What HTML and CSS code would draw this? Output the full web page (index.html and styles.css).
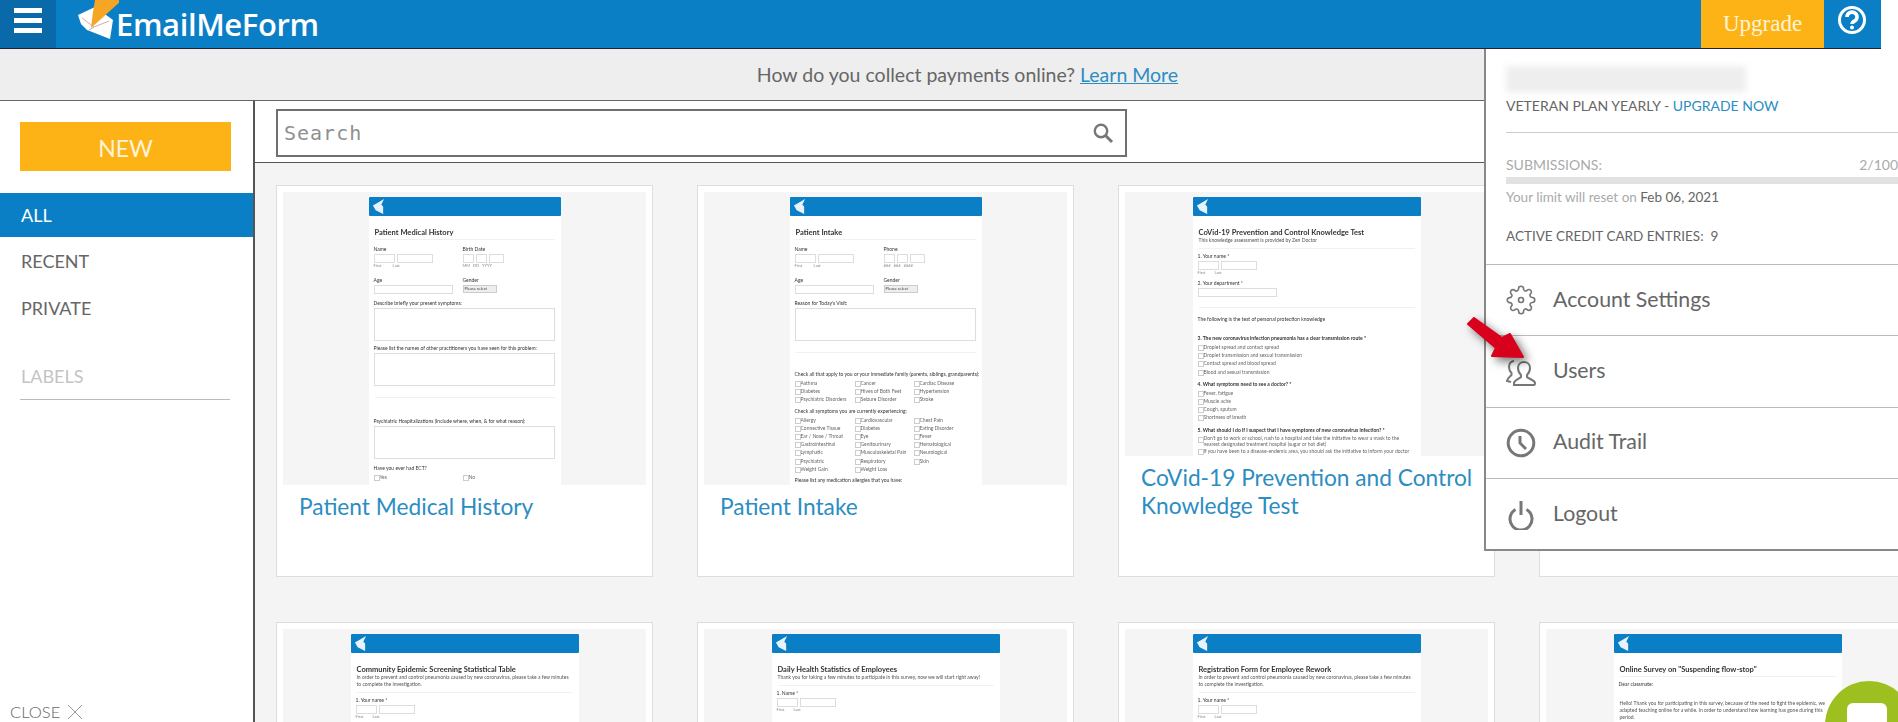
FILE: index.html
```html
<!DOCTYPE html>
<html>
<head>
  <title>EmailMeForm</title>
  <link rel="stylesheet" href="styles.css">
</head>
<body>
  <svg class="defs" width="0" height="0">
    <symbol id="mini-logo" viewBox="0 0 14 16">
      <polygon points="1,7 8,3 13,0 10,6 12,8 12,16 4,12" fill="#e8f2fa"/>
    </symbol>
  </svg>

  <!-- Top bar -->
  <header class="topbar">
    <div class="burger"><span></span><span></span><span></span></div>
    <div class="brand">
      <svg class="brand-mark" viewBox="0 0 42 40">
        <polygon points="1,15 18,7 36,20 33,39 10,30 4,24" fill="#fff"/>
        <polygon points="18,0 45,0 14,28 16,12" fill="#f5a623"/>
        <path d="M5 18 L17 27 L32 21 M12 30 L17 27" stroke="#d9a9a0" stroke-width="1" fill="none"/>
      </svg>
      <span class="brand-name">EmailMeForm</span>
    </div>
    <a class="upgrade">Upgrade</a>
    <div class="help">
      <svg width="30" height="30" viewBox="0 0 30 30">
        <circle cx="15" cy="15" r="12.5" fill="none" stroke="#fff" stroke-width="3"/>
        <path d="M10 12 a5 4.800 0 1 1 7.800 3.900 c-1.800 1-2.800 1.600-2.800 3.100" fill="none" stroke="#fff" stroke-width="3.600"/>
        <circle cx="15" cy="22.500" r="2" fill="#fff"/>
      </svg>
    </div>
  </header>

  <!-- Payment notice -->
  <div class="notice">How do you collect payments online?&nbsp;<a>Learn More</a></div>

  <div class="layout">
    <!-- Left menu -->
    <aside class="sidebar">
      <a class="new-btn">NEW</a>
      <nav class="menu">
        <a class="menu-item active">ALL</a>
        <a class="menu-item">RECENT</a>
        <a class="menu-item">PRIVATE</a>
      </nav>
      <div class="labels">LABELS</div>
      <div class="close">CLOSE
        <svg width="16" height="16" viewBox="0 0 16 16"><path d="M1 1 L15 15 M15 1 L1 15" stroke="#999" stroke-width="1"/></svg>
      </div>
    </aside>

    <main class="content">
      <div class="search-row">
        <div class="search">
          <input class="search-input" type="text" placeholder="Search">
          <svg width="22" height="22" viewBox="0 0 22 22">
            <circle cx="9" cy="9" r="6.200" fill="none" stroke="#777" stroke-width="2.400"/>
            <path d="M13.500 13.500 L20 20" stroke="#777" stroke-width="3"/>
          </svg>
        </div>
      </div>

      <div class="cards">
        <!-- Patient Medical History -->
        <article class="card">
          <div class="thumb">
            <div class="sheet">
              <div class="sheet-head"><svg><use href="#mini-logo"/></svg></div>
              <div class="sheet-title">Patient Medical History</div>
              <div class="f-two">
                <div><div class="f-label">Name</div><div class="f-inline"><i class="f-box w20"></i><i class="f-box w36"></i></div><div class="f-hint">First &nbsp; &nbsp; &nbsp; &nbsp; &nbsp; Last</div></div>
                <div><div class="f-label">Birth Date</div><div class="f-inline"><i class="f-box w11"></i><i class="f-box w11"></i><i class="f-box w14"></i></div><div class="f-hint">MM &nbsp; DD &nbsp; YYYY</div></div>
              </div>
              <div class="f-two">
                <div><div class="f-label">Age</div><i class="f-box w79"></i></div>
                <div><div class="f-label">Gender</div><i class="f-select">Please select</i></div>
              </div>
              <div class="f-label">Describe briefly your present symptoms:</div>
              <div class="f-area"></div>
              <div class="f-label">Please list the names of other practitioners you have seen for this problem:</div>
              <div class="f-area"></div>
              <div class="f-rule"></div>
              <div class="f-label">Psychiatric Hospitalizations (Include where, when, &amp; for what reason):</div>
              <div class="f-area"></div>
              <div class="f-label">Have you ever had ECT?</div>
              <div class="f-two"><div class="f-check">Yes</div><div class="f-check">No</div></div>
            </div>
          </div>
          <a class="card-title">Patient Medical History</a>
        </article>

        <!-- Patient Intake -->
        <article class="card">
          <div class="thumb">
            <div class="sheet">
              <div class="sheet-head"><svg><use href="#mini-logo"/></svg></div>
              <div class="sheet-title">Patient Intake</div>
              <div class="f-two">
                <div><div class="f-label">Name</div><div class="f-inline"><i class="f-box w20"></i><i class="f-box w36"></i></div><div class="f-hint">First &nbsp; &nbsp; &nbsp; &nbsp; &nbsp; Last</div></div>
                <div><div class="f-label">Phone</div><div class="f-inline"><i class="f-box w11"></i><i class="f-box w11"></i><i class="f-box w14"></i></div><div class="f-hint">### &nbsp; ### &nbsp; ####</div></div>
              </div>
              <div class="f-two">
                <div><div class="f-label">Age</div><i class="f-box w79"></i></div>
                <div><div class="f-label">Gender</div><i class="f-select">Please select</i></div>
              </div>
              <div class="f-label">Reason for Today's Visit:</div>
              <div class="f-area"></div>
              <div class="f-rule gap-low"></div>
              <div class="f-label">Check all that apply to you or your immediate family (parents, siblings, grandparents):</div>
              <div class="f-three">
                <div class="f-check">Asthma</div><div class="f-check">Cancer</div><div class="f-check">Cardiac Disease</div>
                <div class="f-check">Diabetes</div><div class="f-check">Hives of Both Feet</div><div class="f-check">Hypertension</div>
                <div class="f-check">Psychiatric Disorders</div><div class="f-check">Seizure Disorder</div><div class="f-check">Stroke</div>
              </div>
              <div class="f-label">Check all symptoms you are currently experiencing:</div>
              <div class="f-three">
                <div class="f-check">Allergy</div><div class="f-check">Cardiovascular</div><div class="f-check">Chest Pain</div>
                <div class="f-check">Connective Tissue</div><div class="f-check">Diabetes</div><div class="f-check">Eating Disorder</div>
                <div class="f-check">Ear / Nose / Throat</div><div class="f-check">Eye</div><div class="f-check">Fever</div>
                <div class="f-check">Gastrointestinal</div><div class="f-check">Genitourinary</div><div class="f-check">Hematological</div>
                <div class="f-check">Lymphatic</div><div class="f-check">Musculoskeletal Pain</div><div class="f-check">Neurological</div>
                <div class="f-check">Psychiatric</div><div class="f-check">Respiratory</div><div class="f-check">Skin</div>
                <div class="f-check">Weight Gain</div><div class="f-check">Weight Loss</div>
              </div>
              <div class="f-label">Please list any medication allergies that you have:</div>
            </div>
          </div>
          <a class="card-title">Patient Intake</a>
        </article>

        <!-- CoVid-19 test -->
        <article class="card">
          <div class="thumb thumb-short">
            <div class="sheet sheet-wide">
              <div class="sheet-head"><svg><use href="#mini-logo"/></svg></div>
              <div class="sheet-title has-sub">CoVid-19 Prevention and Control Knowledge Test</div>
              <div class="sheet-sub">This knowledge assessment is provided by Zen Doctor</div>
              <div class="f-label">1. Your name *</div>
              <div class="f-inline"><i class="f-box w20"></i><i class="f-box w36"></i></div>
              <div class="f-hint">First &nbsp; &nbsp; &nbsp; &nbsp; Last</div>
              <div class="f-label">2. Your department *</div>
              <i class="f-box w79"></i>
              <div class="f-rule gap-tight"></div>
              <div class="f-label">The following is the test of personal protection knowledge</div>
              <div class="f-label strong gap-q">3. The new coronavirus infection pneumonia has a clear transmission route *</div>
              <div class="f-check">Droplet spread and contact spread</div>
              <div class="f-check">Droplet transmission and sexual transmission</div>
              <div class="f-check">Contact spread and blood spread</div>
              <div class="f-check">Blood and sexual transmission</div>
              <div class="f-label strong">4. What symptoms need to see a doctor? *</div>
              <div class="f-check">Fever, fatigue</div>
              <div class="f-check">Muscle ache</div>
              <div class="f-check">Cough, sputum</div>
              <div class="f-check">Shortness of breath</div>
              <div class="f-label strong">5. What should I do if I suspect that I have symptoms of new coronavirus infection? *</div>
              <div class="f-check wrap">Don't go to work or school, rush to a hospital and take the initiative to wear a mask to the nearest designated treatment hospital (sugar or hot diet)</div>
              <div class="f-check">If you have been to a disease-endemic area, you should ask the initiative to inform your doctor</div>
            </div>
          </div>
          <a class="card-title">CoVid-19 Prevention and Control Knowledge Test</a>
        </article>

        <article class="card"></article>

        <!-- Second row, cut off by the window -->
        <article class="card">
          <div class="thumb">
            <div class="sheet sheet-wide">
              <div class="sheet-head"><svg><use href="#mini-logo"/></svg></div>
              <div class="sheet-title has-sub">Community Epidemic Screening Statistical Table</div>
              <div class="sheet-sub">In order to prevent and control pneumonia caused by new coronavirus, please take a few minutes to complete the investigation.</div>
              <div class="f-label">1. Your name *</div>
              <div class="f-inline"><i class="f-box w20"></i><i class="f-box w36"></i></div>
              <div class="f-hint">First &nbsp; &nbsp; &nbsp; &nbsp; Last</div>
            </div>
          </div>
        </article>
        <article class="card">
          <div class="thumb">
            <div class="sheet sheet-wide">
              <div class="sheet-head"><svg><use href="#mini-logo"/></svg></div>
              <div class="sheet-title has-sub">Daily Health Statistics of Employees</div>
              <div class="sheet-sub">Thank you for taking a few minutes to participate in this survey, now we will start right away!</div>
              <div class="f-label">1. Name *</div>
              <div class="f-inline"><i class="f-box w20"></i><i class="f-box w36"></i></div>
              <div class="f-hint">First &nbsp; &nbsp; &nbsp; &nbsp; Last</div>
            </div>
          </div>
        </article>
        <article class="card">
          <div class="thumb">
            <div class="sheet sheet-wide">
              <div class="sheet-head"><svg><use href="#mini-logo"/></svg></div>
              <div class="sheet-title has-sub">Registration Form for Employee Rework</div>
              <div class="sheet-sub">In order to prevent and control pneumonia caused by new coronavirus, please take a few minutes to complete the investigation.</div>
              <div class="f-label">1. Your name *</div>
              <div class="f-inline"><i class="f-box w20"></i><i class="f-box w36"></i></div>
              <div class="f-hint">First &nbsp; &nbsp; &nbsp; &nbsp; Last</div>
            </div>
          </div>
        </article>
        <article class="card">
          <div class="thumb">
            <div class="sheet sheet-wide">
              <div class="sheet-head"><svg><use href="#mini-logo"/></svg></div>
              <div class="sheet-title">Online Survey on "Suspending flow-stop"</div>
              <div class="f-label">Dear classmate:</div>
              <div class="sheet-sub gap-q">Hello! Thank you for participating in this survey, because of the need to fight the epidemic, we adapted teaching online for a while. In order to understand how learning has gone during this period.</div>
            </div>
          </div>
        </article>
      </div>
    </main>
  </div>

  <!-- Account dropdown -->
  <section class="account">
    <div class="account-top">
      <div class="blurred-name"></div>
      <div class="plan">VETERAN PLAN YEARLY - <a>UPGRADE NOW</a></div>
    </div>
    <div class="usage">
      <div class="usage-head"><span>SUBMISSIONS:</span><span>2/100</span></div>
      <div class="usage-bar"></div>
      <div class="usage-reset">Your limit will reset on <b>Feb 06, 2021</b></div>
      <div class="usage-cards">ACTIVE CREDIT CARD ENTRIES:&nbsp; 9</div>
    </div>
    <a class="account-row">
      <svg width="30" height="30" viewBox="0 0 24 24" fill="none" stroke="#777" stroke-width="1.300">
        <circle cx="12" cy="12" r="2"/>
        <path d="M19.400 15a1.650 1.650 0 0 0 .33 1.820l.06.06a2 2 0 0 1 0 2.830 2 2 0 0 1-2.830 0l-.06-.06a1.650 1.650 0 0 0-1.820-.33 1.650 1.650 0 0 0-1 1.510V21a2 2 0 0 1-2 2 2 2 0 0 1-2-2v-.09A1.650 1.650 0 0 0 9 19.400a1.650 1.650 0 0 0-1.820.33l-.06.06a2 2 0 0 1-2.830 0 2 2 0 0 1 0-2.830l.06-.06a1.650 1.650 0 0 0 .33-1.820 1.650 1.650 0 0 0-1.510-1H3a2 2 0 0 1-2-2 2 2 0 0 1 2-2h.09A1.650 1.650 0 0 0 4.600 9a1.650 1.650 0 0 0-.33-1.820l-.06-.06a2 2 0 0 1 0-2.830 2 2 0 0 1 2.830 0l.06.06a1.650 1.650 0 0 0 1.820.33H9a1.650 1.650 0 0 0 1-1.510V3a2 2 0 0 1 2-2 2 2 0 0 1 2 2v.09a1.650 1.650 0 0 0 1 1.510 1.650 1.650 0 0 0 1.820-.33l.06-.06a2 2 0 0 1 2.830 0 2 2 0 0 1 0 2.830l-.06.06a1.650 1.650 0 0 0-.33 1.820V9a1.650 1.650 0 0 0 1.510 1H21a2 2 0 0 1 2 2 2 2 0 0 1-2 2h-.09a1.650 1.650 0 0 0-1.510 1z"/>
      </svg>
      Account Settings
    </a>
    <a class="account-row">
      <svg width="30" height="30" viewBox="0 0 30 30" fill="none" stroke="#777" stroke-width="2">
        <path d="M8 28 h20 c1 0 1-1 1-2 c-.5-3-6-4-8-6 v-2 c2-2 3-4 3-7 c0-4-3-6-6-6 s-6 2-6 6 c0 3 1 5 3 7 v2 c-2 2-6.500 3-7 6 c0 1 0 2 0 2z"/>
        <path d="M8 4 c-3 .5-5 2.500-5 6 c0 2.500 1 4.500 2.500 6 v2 c-1.500 1.500-4 3-4.500 6 l4 1"/>
      </svg>
      Users
    </a>
    <a class="account-row">
      <svg width="30" height="30" viewBox="0 0 30 30" fill="none" stroke="#777">
        <circle cx="15" cy="15" r="12.800" stroke-width="3"/>
        <path d="M14 8 L14 15 L20 21" stroke-width="3"/>
      </svg>
      Audit Trail
    </a>
    <a class="account-row">
      <svg width="30" height="30" viewBox="0 0 30 30" fill="none" stroke="#777" stroke-width="3">
        <path d="M9.500 9.500 a11 11 0 1 0 11 0"/>
        <path d="M15 1 V15"/>
      </svg>
      Logout
    </a>
  </section>

  <!-- Red callout arrow -->
  <svg class="callout" width="70" height="60" viewBox="0 0 70 60">
    <polygon fill="#d9001b" stroke="#d9001b" stroke-width="2" stroke-linejoin="round" points="2,9 8,3 36,23 44,19 57,42 26,41 30,33"/>
  </svg>

  <!-- Chat bubble -->
  <div class="chat"><span class="chat-face"></span></div>
</body>
</html>
```

FILE: styles.css
```css
* {
  box-sizing: border-box;
}

html, body {
  height: 722px;
  overflow: hidden;
}

body {
  margin: 0;
  position: relative;
  background-color: #fff;
  font-family: Lato, "Open Sans", sans-serif;
  color: #666;
}

a {
  text-decoration: none;
}

.defs {
  position: absolute;
}

/* Top bar */
.topbar {
  display: flex;
  align-items: stretch;
  width: 1881px;
  height: 49px;
  background-color: #0a7fc6;
  border-bottom: 1px solid #223;
}

.burger {
  width: 56px;
  display: flex;
  flex-direction: column;
  gap: 5px;
  padding: 8px 14px;
  background-color: #0a69a8;
}

.burger span {
  display: block;
  height: 5px;
  background-color: #fff;
}

.brand {
  display: flex;
  align-items: center;
  flex: 1;
  padding-left: 21px;
}

.brand-mark {
  width: 42px;
  height: 40px;
  margin-top: -8px;
}

.brand-name {
  margin-left: -3px;
  font-family: "Open Sans", sans-serif;
  font-size: 31px;
  font-weight: 600;
  letter-spacing: -0.4px;
  color: #fff;
}

.upgrade {
  width: 123px;
  display: flex;
  align-items: center;
  justify-content: center;
  background-color: #fdb316;
  color: #fff4d8;
  font-family: "Liberation Serif", serif;
  font-size: 23px;
}

.help {
  width: 57px;
  display: flex;
  justify-content: center;
  padding-top: 5px;
  padding-right: 1px;
}

/* Notice strip */
.notice {
  height: 52px;
  display: flex;
  align-items: center;
  justify-content: center;
  padding-left: 37px;
  background-color: #eeeeee;
  border-bottom: 1px solid #666;
  font-size: 19.500px;
  color: #666;
}

.notice a {
  color: #2b8dc2;
  text-decoration: underline;
}

.layout {
  display: flex;
  height: 621px;
}

/* Left menu */
.sidebar {
  position: relative;
  width: 255px;
  flex: none;
  padding-top: 21px;
  background-color: #fff;
  border-right: 2px solid #555;
}

.new-btn {
  display: flex;
  align-items: center;
  justify-content: center;
  width: 211px;
  height: 49px;
  margin-left: 20px;
  padding-top: 3px;
  background-color: #fdb316;
  color: #fff4d8;
  font-size: 23px;
}

.menu {
  margin-top: 22px;
}

.menu-item {
  display: flex;
  align-items: center;
  height: 47px;
  padding-left: 21px;
  font-size: 18px;
  color: #666;
}

.menu-item.active {
  height: 44px;
  background-color: #0a7fc6;
  color: #fff;
}

.labels {
  margin: 34px 23px 0 20px;
  padding: 0 0 12px 1px;
  border-bottom: 1px solid #bbb;
  font-size: 18px;
  color: #c4c4c4;
}

.close {
  position: absolute;
  left: 10px;
  bottom: 0;
  display: flex;
  align-items: center;
  gap: 7px;
  font-size: 16.500px;
  font-weight: 300;
  color: #666;
}

/* Main column */
.content {
  flex: 1;
  min-width: 0;
  overflow: hidden;
  background-color: #f4f4f4;
}

.search-row {
  height: 62px;
  padding: 8px 0 0 21px;
  background-color: #fff;
  border-bottom: 1px solid #555;
}

.search {
  display: flex;
  align-items: center;
  width: 851px;
  height: 48px;
  padding: 0 11px 0 6px;
  background-color: #fff;
  border: 2px solid #707070;
}

.search-input {
  flex: 1;
  border: none;
  outline: none;
  padding: 0;
  font-family: "DejaVu Sans Mono", monospace;
  font-size: 20px;
  letter-spacing: 1px;
}

.search-input::placeholder {
  color: #8f8f8f;
}

.cards {
  display: grid;
  grid-template-columns: repeat(4, 377px);
  grid-auto-rows: 392px;
  column-gap: 44px;
  row-gap: 45px;
  padding: 22px 0 0 21px;
}

.card {
  display: flex;
  flex-direction: column;
  padding: 6px;
  background-color: #fff;
  border: 1px solid #ddd;
}

.thumb {
  height: 293px;
  flex: none;
  overflow: hidden;
  padding-top: 5px;
  background-color: #f5f5f5;
  filter: blur(0.6px);
}

.thumb-short {
  height: 264px;
}

.card-title {
  display: block;
  padding: 8px 0 0 16px;
  font-size: 22.700px;
  line-height: 28px;
  color: #2b8dc2;
}

/* The little form pictures inside a card */
.sheet {
  width: 192px;
  margin: 0 auto;
  min-height: 100%;
  padding-bottom: 20px;
  background-color: #fff;
  font-size: 5px;
  color: #444;
}

.sheet-wide {
  width: 228px;
}

.sheet-head {
  height: 19px;
  margin-bottom: 12px;
  padding: 2px 0 0 3px;
  background-color: #0a7fc6;
  border-radius: 1px;
}

.sheet-head svg {
  display: block;
  width: 13px;
  height: 15px;
}

.sheet-title {
  margin: 0 6px 2px;
  padding-bottom: 2px;
  border-bottom: 1px solid #f1f1f1;
  font-size: 7.500px;
  font-weight: 700;
  color: #333;
  white-space: nowrap;
}

.sheet-title.has-sub {
  margin-bottom: 0;
  padding-bottom: 0;
  border: none;
}

.sheet-sub {
  margin: 0 6px 3px;
  padding-bottom: 4px;
  border-bottom: 1px solid #f1f1f1;
  font-size: 5px;
  line-height: 7px;
  color: #555;
}

.f-two {
  display: grid;
  grid-template-columns: 89px 1fr;
  margin: 0 5px;
}

.f-two + .f-two {
  margin-top: 4px;
}

.f-three {
  display: grid;
  grid-template-columns: 60px 59px 1fr;
  margin: 0 5px 1px;
}

.f-label {
  margin: 4px 5px 1px;
  font-size: 5px;
  line-height: 7px;
  white-space: nowrap;
  color: #333;
}

.f-two .f-label {
  margin: 4px 0 1px;
}

.f-two + .f-label {
  margin-top: 6px;
}

.f-label.strong {
  margin-top: 5px;
  font-weight: 700;
}

.sheet-sub.gap-q,
.f-label.gap-q {
  margin-top: 12px;
}

.f-inline {
  display: flex;
  gap: 2px;
}

.sheet > .f-inline,
.sheet > .f-box {
  margin-left: 5px;
}

.f-box {
  display: block;
  height: 9px;
  background-color: #fff;
  border: 1px solid #ddd;
}

.w11 { width: 11px; }
.w14 { width: 15px; }
.w20 { width: 21px; }
.w36 { width: 36px; }
.w79 { width: 79px; }

.f-hint {
  margin: 0 5px;
  font-size: 4px;
  line-height: 6px;
  color: #888;
}

.f-two .f-hint {
  margin: 0;
}

.f-select {
  display: block;
  width: 34px;
  height: 8px;
  padding-left: 1px;
  background-color: #eee;
  border: 1px solid #ccc;
  font-size: 4px;
  font-style: normal;
  line-height: 6px;
  color: #444;
}

.f-area {
  height: 33px;
  margin: 0 6px 4px 5px;
  background-color: #fff;
  border: 1px solid #ddd;
}

.f-area + .f-label + .f-two {
  margin-top: 1px;
}

.f-rule {
  margin: 11px 6px 20px;
  border-top: 1px solid #f1f1f1;
}

.f-rule + .f-label + .f-area {
  margin-bottom: 6px;
}

.f-rule.gap-low {
  margin-bottom: 18px;
}

.f-rule.gap-tight {
  margin: 10px 6px 8px;
}

.f-check {
  position: relative;
  padding-left: 6px;
  margin-left: 0;
  font-size: 5px;
  line-height: 8.200px;
  white-space: nowrap;
  color: #666;
}

.sheet > .f-check {
  margin-left: 5px;
}

.f-check.wrap {
  white-space: normal;
  line-height: 6px;
  margin-right: 8px;
}

.f-check::before {
  content: "";
  position: absolute;
  left: 0;
  top: 2px;
  width: 4px;
  height: 4px;
  border: 1px solid #ccc;
}

/* Account dropdown, sits over the page */
.account {
  position: absolute;
  left: 1484px;
  top: 49px;
  width: 414px;
  height: 502px;
  padding-left: 1px;
  background-color: #fff;
  border-left: 2px solid #888;
  border-bottom: 2px solid #888;
}

.account-top {
  margin-left: 19px;
  height: 84px;
  padding-top: 17px;
  border-bottom: 1px solid #ccc;
}

.blurred-name {
  width: 240px;
  height: 26px;
  background-color: #eeeeee;
  filter: blur(3px);
}

.plan {
  margin-top: 5px;
  font-size: 14px;
  line-height: 18px;
  color: #666;
}

.plan a {
  color: #2b8dc2;
}

.usage {
  height: 132px;
  padding-top: 24px;
  border-bottom: 1px solid #bbb;
  margin-left: -1px;
  padding-left: 20px;
  font-size: 13.500px;
}

.usage-head {
  display: flex;
  justify-content: space-between;
  font-size: 14px;
  line-height: 16px;
  color: #aaa;
}

.usage-bar {
  height: 7px;
  margin-top: 4px;
  background-color: #e2e2e2;
}

.usage-reset {
  margin-top: 4px;
  line-height: 18px;
  color: #aaa;
}

.usage-reset b {
  font-weight: 400;
  color: #666;
}

.usage-cards {
  margin-top: 21px;
  line-height: 18px;
  color: #666;
}

.account-row {
  display: flex;
  align-items: center;
  gap: 17px;
  height: 71.400px;
  margin-left: -1px;
  padding: 0 0 3px 20px;
  border-bottom: 1px solid #bbb;
  font-size: 21.300px;
  color: #666;
}

.account-row svg {
  margin-top: 3px;
}

.account-row:last-child {
  border-bottom: none;
}

.callout {
  position: absolute;
  left: 1466px;
  top: 315px;
  filter: drop-shadow(4px 4px 5px rgba(0, 0, 0, 0.55));
}

/* Chat bubble in the corner */
.chat {
  position: absolute;
  left: 1825px;
  top: 681px;
  width: 88px;
  height: 88px;
  padding: 22px;
  border-radius: 50%;
  background-color: #9dbf1f;
}

.chat-face {
  display: block;
  width: 40px;
  height: 40px;
  border-radius: 6px;
  background-color: #fff;
}
```
